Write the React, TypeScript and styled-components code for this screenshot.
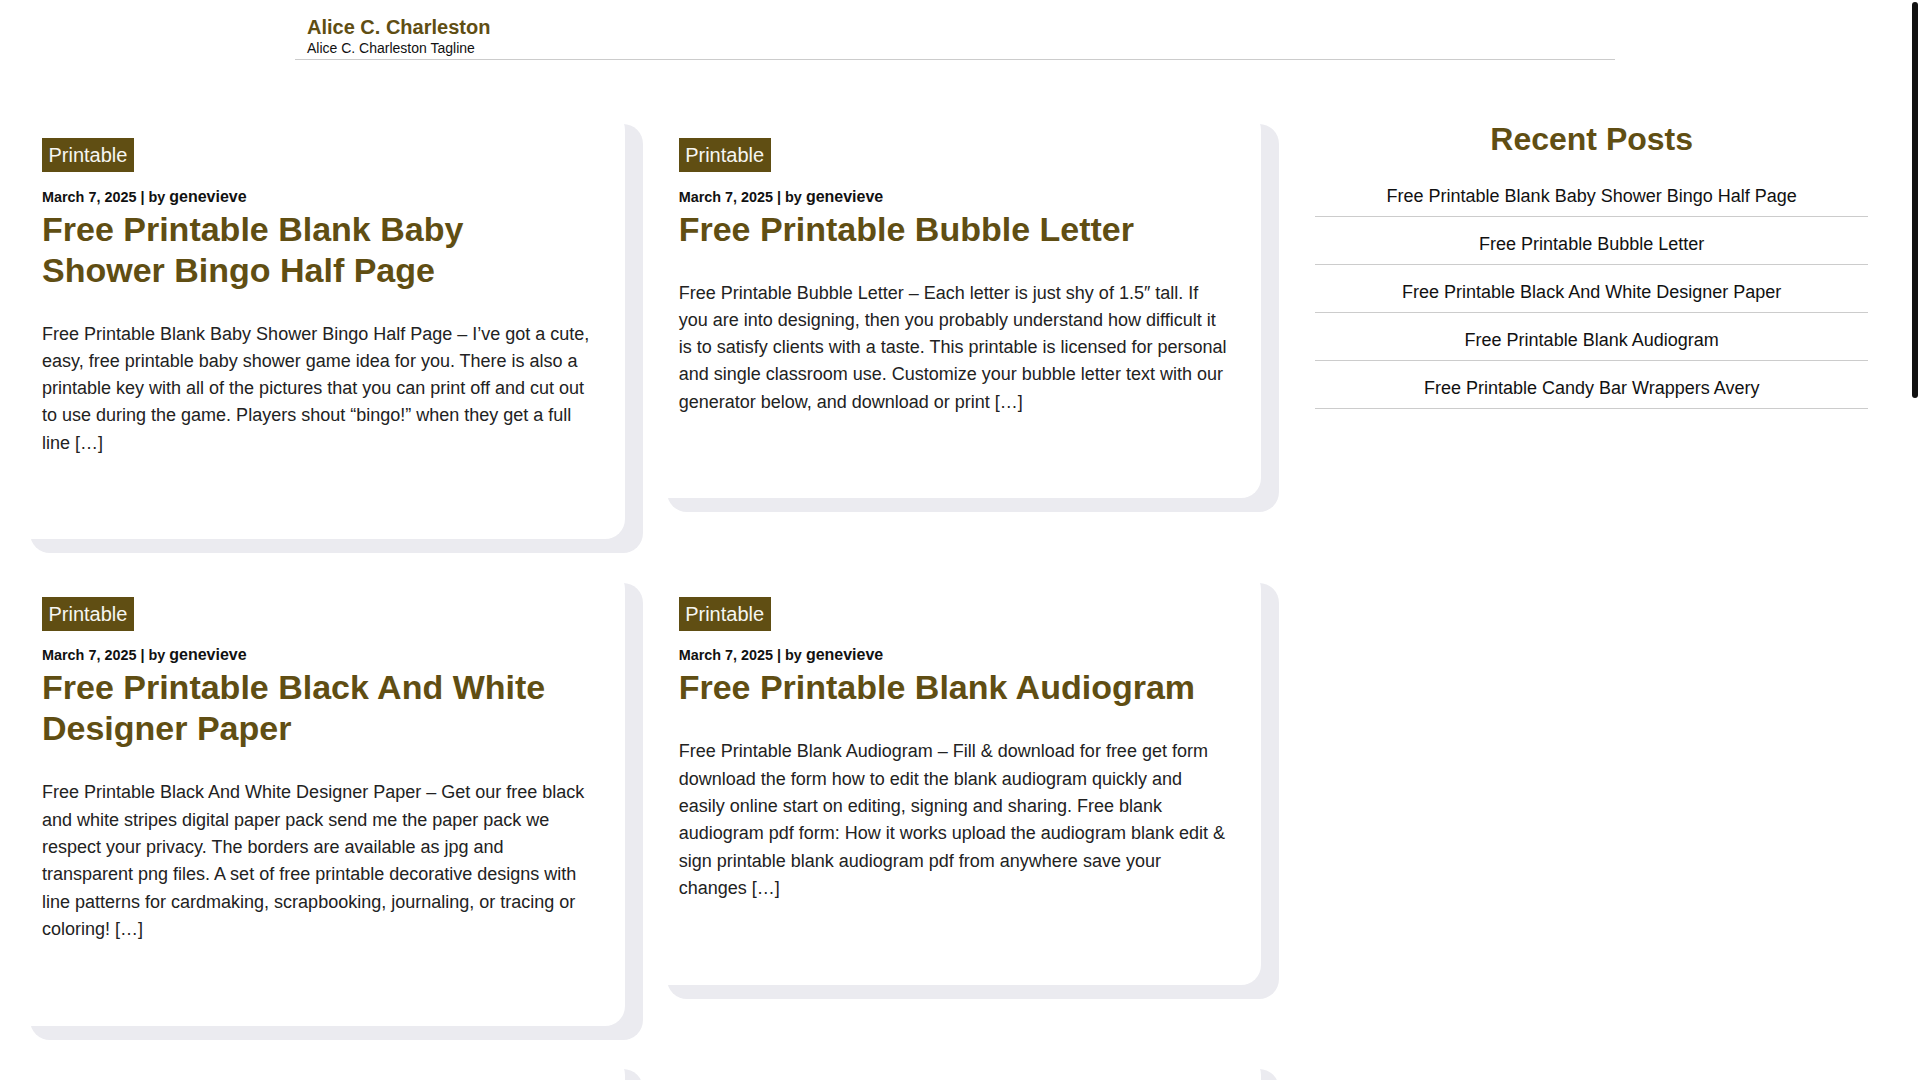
import styled, { createGlobalStyle } from "styled-components";

const brown = "#604e13";

const GlobalStyle = createGlobalStyle`
  *, *::before, *::after {
    box-sizing: border-box;
  }
  html, body {
    margin: 0;
    padding: 0;
    background: #fff;
  }
  body {
    font-family: "Liberation Sans", Arial, sans-serif;
    color: #111;
  }
`;

// the page reserves a 10px gutter on the right, where the scrollbar sits
const Page = styled.div`
  margin-right: 10px;
`;

const ScrollTrack = styled.div`
  position: fixed;
  top: 0;
  right: 0;
  width: 10px;
  height: 100vh;
  background: #fff;
`;
const ScrollThumb = styled.div`
  margin: 2px 2px 0;
  height: 396px;
  border-radius: 3px;
  background: #111;
`;

const Header = styled.header`
  max-width: 1320px;
  margin: 0 auto;
  padding: 15px 12px 2px;
  border-bottom: 1px solid #ccc;
`;
const SiteTitle = styled.a`
  display: block;
  font-size: 20px;
  line-height: 24px;
  font-weight: 700;
  color: ${brown};
  text-decoration: none;
`;
const Tagline = styled.p`
  margin: 0;
  font-size: 14px;
  line-height: 18px;
  color: #111;
`;

const Layout = styled.div`
  display: grid;
  grid-template-columns: repeat(3, minmax(0, 1fr));
  column-gap: 24px;
  padding: 0 12px;
  margin-top: 50px;
`;

const PostGrid = styled.main`
  grid-column: span 2;
  display: grid;
  grid-template-columns: repeat(2, minmax(0, 1fr));
  column-gap: 24px;
  row-gap: 29.5px;
  align-items: start;
`;

const Card = styled.article`
  display: flex;
  flex-direction: column;
  padding: 28px 30px;
  background: #fff;
  border-radius: 20px;
  box-shadow: 18px 14px 0 #ebebf0;
`;
const Category = styled.a`
  align-self: flex-start;
  padding: 5px 6.5px;
  font-size: 20px;
  line-height: 24px;
  color: #f6f6f2;
  background: ${brown};
  text-decoration: none;
`;
const Meta = styled.div`
  margin-top: 14.5px;
  font-size: 14.4px;
  line-height: 20px;
  font-weight: 700;
  color: #111;
`;
const Author = styled.span`
  font-size: 16px;
`;
const PostTitle = styled.h2`
  margin: 2px 0 0;
  font-size: 34px;
  line-height: 41px;
  font-weight: 700;
  color: ${brown};
`;
const Excerpt = styled.p`
  margin: 30px 0 54.5px;
  font-size: 18px;
  line-height: 27.3px;
  color: #222;
`;

const Sidebar = styled.aside`
  padding: 8.5px 30px 0;
`;
const WidgetTitle = styled.h2`
  margin: 0 0 9px;
  font-size: 32px;
  line-height: 41px;
  font-weight: 700;
  text-align: center;
  color: ${brown};
`;
const RecentList = styled.ul`
  list-style: none;
  margin: 0;
  padding: 0;
`;
const RecentItem = styled.li`
  padding: 14px 0 6px;
  border-bottom: 1px solid #ccc;
  text-align: center;
  font-size: 18px;
  line-height: 27px;
  a {
    color: #111;
    text-decoration: none;
  }
`;

const Pagination = styled.nav`
  grid-column: span 2;
  display: flex;
  gap: 12px;
  padding: 20px 0 0;
  font-size: 18px;
  a {
    color: ${brown};
    text-decoration: none;
  }
`;

const Footer = styled.footer`
  margin-top: 60px;
  padding: 40px 12px 120px;
  border-top: 1px solid #ccc;
  text-align: center;
  font-size: 14px;
  color: #111;
`;

type Post = { title: string; excerpt: string };

const posts: Post[] = [
  {
    title: "Free Printable Blank Baby Shower Bingo Half Page",
    excerpt:
      "Free Printable Blank Baby Shower Bingo Half Page – I’ve got a cute, easy, free printable baby shower game idea for you. There is also a printable key with all of the pictures that you can print off and cut out to use during the game. Players shout “bingo!” when they get a full line […]",
  },
  {
    title: "Free Printable Bubble Letter",
    excerpt:
      "Free Printable Bubble Letter – Each letter is just shy of 1.5″ tall. If you are into designing, then you probably understand how difficult it is to satisfy clients with a taste. This printable is licensed for personal and single classroom use. Customize your bubble letter text with our generator below, and download or print […]",
  },
  {
    title: "Free Printable Black And White Designer Paper",
    excerpt:
      "Free Printable Black And White Designer Paper – Get our free black and white stripes digital paper pack send me the paper pack we respect your privacy. The borders are available as jpg and transparent png files. A set of free printable decorative designs with line patterns for cardmaking, scrapbooking, journaling, or tracing or coloring! […]",
  },
  {
    title: "Free Printable Blank Audiogram",
    excerpt:
      "Free Printable Blank Audiogram – Fill & download for free get form download the form how to edit the blank audiogram quickly and easily online start on editing, signing and sharing. Free blank audiogram pdf form: How it works upload the audiogram blank edit & sign printable blank audiogram pdf from anywhere save your changes […]",
  },
  {
    title: "Free Printable Candy Bar Wrappers Avery",
    excerpt:
      "Free Printable Candy Bar Wrappers Avery – Personalize these wrappers for birthdays, showers and holidays. Print them on full sheet labels or plain paper, trim along the lines and wrap them around a standard candy bar for a sweet little gift […]",
  },
  {
    title: "Free Printable Bingo Cards For Adults",
    excerpt:
      "Free Printable Bingo Cards For Adults – Generate and print as many cards as you need for your next party or game night. Each card is randomized so every player gets a unique board, and the caller sheet is included […]",
  },
  {
    title: "Free Printable Birthday Cards For Mom",
    excerpt:
      "Free Printable Birthday Cards For Mom – Show her how much you care with a handmade touch. Choose a design, print it on card stock, fold it in half and add your own message inside before you hand it over […]",
  },
  {
    title: "Free Printable Baby Shower Games",
    excerpt:
      "Free Printable Baby Shower Games – A collection of easy games for any shower theme, from word scrambles to price guessing. Simply download, print and hand them out to your guests with a pen […]",
  },
];

const recent = [
  "Free Printable Blank Baby Shower Bingo Half Page",
  "Free Printable Bubble Letter",
  "Free Printable Black And White Designer Paper",
  "Free Printable Blank Audiogram",
  "Free Printable Candy Bar Wrappers Avery",
];

export default function App() {
  return (
    <>
      <GlobalStyle />
      <Page>
        <Header>
          <SiteTitle href="#">Alice C. Charleston</SiteTitle>
          <Tagline>Alice C. Charleston Tagline</Tagline>
        </Header>
        <Layout>
          <PostGrid>
            {posts.map((post) => (
              <Card key={post.title}>
                <Category href="#">Printable</Category>
                <Meta>
                  March 7, 2025 | by <Author>genevieve</Author>
                </Meta>
                <PostTitle>{post.title}</PostTitle>
                <Excerpt>{post.excerpt}</Excerpt>
              </Card>
            ))}
            <Pagination>
              <a href="#">1</a>
              <a href="#">2</a>
              <a href="#">3</a>
              <a href="#">Next »</a>
            </Pagination>
          </PostGrid>
          <Sidebar>
            <WidgetTitle>Recent Posts</WidgetTitle>
            <RecentList>
              {recent.map((r) => (
                <RecentItem key={r}>
                  <a href="#">{r}</a>
                </RecentItem>
              ))}
            </RecentList>
          </Sidebar>
        </Layout>
        <Footer>© 2025 Alice C. Charleston</Footer>
      </Page>
      <ScrollTrack>
        <ScrollThumb />
      </ScrollTrack>
    </>
  );
}
